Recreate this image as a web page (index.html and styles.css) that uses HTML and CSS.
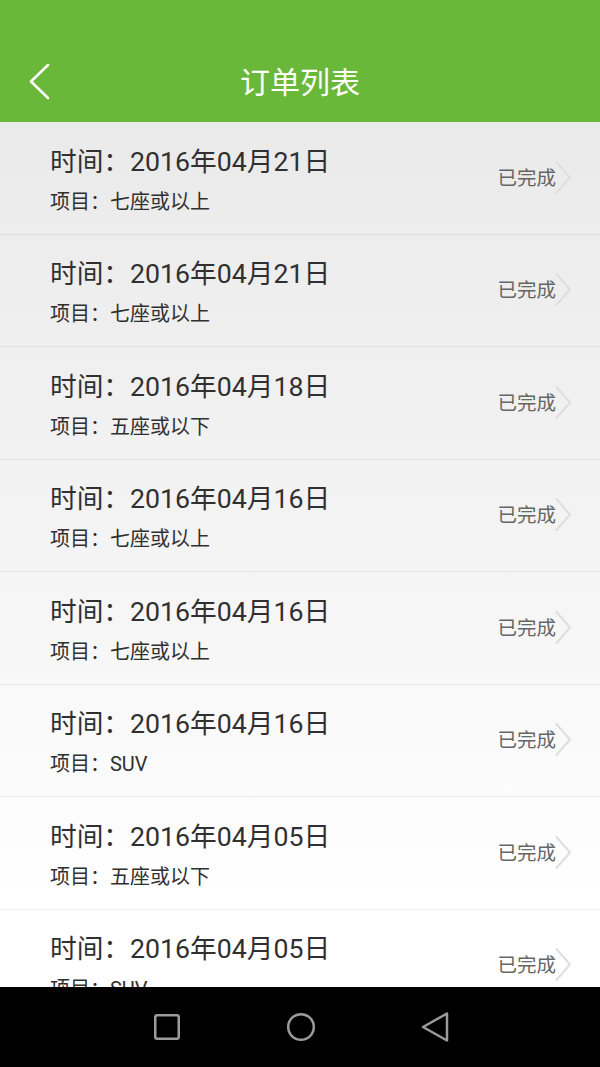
FILE: index.html
```html
<!DOCTYPE html>
<html lang="zh-CN">
<head>
<meta charset="utf-8">
<title>订单列表</title>
<link rel="stylesheet" href="styles.css">
</head>
<body>
<div class="screen">
  <header class="appbar">
    <div class="statusbar"></div>
    <div class="toolbar">
      <svg class="back" width="24" height="40" viewBox="0 0 24 40"><polyline points="19,1 2,17.5 19,34" fill="none" stroke="#fff" stroke-width="2.6" stroke-linecap="round" stroke-linejoin="round"/></svg>
      <h1 class="title">订单列表</h1>
    </div>
  </header>
  <main class="list">
    <div class="row">
      <div class="info"><div class="time">时间：2016年04月21日</div><div class="item">项目：七座或以上</div></div>
      <div class="status">已完成</div>
      <svg class="chev" width="18" height="36" viewBox="0 0 18 36"><polyline points="2,1.5 16,17.5 2,33.5" fill="none" stroke="#dedede" stroke-width="2"/></svg>
    </div>
    <div class="row">
      <div class="info"><div class="time">时间：2016年04月21日</div><div class="item">项目：七座或以上</div></div>
      <div class="status">已完成</div>
      <svg class="chev" width="18" height="36" viewBox="0 0 18 36"><polyline points="2,1.5 16,17.5 2,33.5" fill="none" stroke="#dedede" stroke-width="2"/></svg>
    </div>
    <div class="row">
      <div class="info"><div class="time">时间：2016年04月18日</div><div class="item">项目：五座或以下</div></div>
      <div class="status">已完成</div>
      <svg class="chev" width="18" height="36" viewBox="0 0 18 36"><polyline points="2,1.5 16,17.5 2,33.5" fill="none" stroke="#dedede" stroke-width="2"/></svg>
    </div>
    <div class="row">
      <div class="info"><div class="time">时间：2016年04月16日</div><div class="item">项目：七座或以上</div></div>
      <div class="status">已完成</div>
      <svg class="chev" width="18" height="36" viewBox="0 0 18 36"><polyline points="2,1.5 16,17.5 2,33.5" fill="none" stroke="#dedede" stroke-width="2"/></svg>
    </div>
    <div class="row">
      <div class="info"><div class="time">时间：2016年04月16日</div><div class="item">项目：七座或以上</div></div>
      <div class="status">已完成</div>
      <svg class="chev" width="18" height="36" viewBox="0 0 18 36"><polyline points="2,1.5 16,17.5 2,33.5" fill="none" stroke="#dedede" stroke-width="2"/></svg>
    </div>
    <div class="row">
      <div class="info"><div class="time">时间：2016年04月16日</div><div class="item">项目：SUV</div></div>
      <div class="status">已完成</div>
      <svg class="chev" width="18" height="36" viewBox="0 0 18 36"><polyline points="2,1.5 16,17.5 2,33.5" fill="none" stroke="#dedede" stroke-width="2"/></svg>
    </div>
    <div class="row">
      <div class="info"><div class="time">时间：2016年04月05日</div><div class="item">项目：五座或以下</div></div>
      <div class="status">已完成</div>
      <svg class="chev" width="18" height="36" viewBox="0 0 18 36"><polyline points="2,1.5 16,17.5 2,33.5" fill="none" stroke="#dedede" stroke-width="2"/></svg>
    </div>
    <div class="row">
      <div class="info"><div class="time">时间：2016年04月05日</div><div class="item">项目：SUV</div></div>
      <div class="status">已完成</div>
      <svg class="chev" width="18" height="36" viewBox="0 0 18 36"><polyline points="2,1.5 16,17.5 2,33.5" fill="none" stroke="#dedede" stroke-width="2"/></svg>
    </div>
  </main>
  <nav class="navbar">
    <svg width="30" height="30" viewBox="0 0 30 30"><rect x="3.25" y="3.25" width="23.5" height="23.5" rx="2" fill="none" stroke="#9b9b9b" stroke-width="2.5"/></svg>
    <svg width="30" height="30" viewBox="0 0 30 30"><circle cx="15" cy="15" r="12.8" fill="none" stroke="#9b9b9b" stroke-width="2.5"/></svg>
    <svg width="30" height="32" viewBox="0 0 30 32"><path d="M27,2.5 L3,16 L27,29.5 Z" fill="none" stroke="#9b9b9b" stroke-width="2.5" stroke-linejoin="round"/></svg>
  </nav>
</div>
</body>
</html>
```

FILE: styles.css
```css
* { box-sizing: border-box; }
html, body { margin: 0; padding: 0; }
body {
  font-family: Roboto, "Noto Sans CJK SC", sans-serif;
  background: #fff;
}
.screen {
  width: 600px;
  height: 1067px;
  display: flex;
  flex-direction: column;
  overflow: hidden;
}
.appbar {
  background: #6ab83a;
  flex: 0 0 122px;
  display: flex;
  flex-direction: column;
}
.statusbar { flex: 0 0 40px; }
.toolbar {
  flex: 1;
  display: flex;
  align-items: center;
  justify-content: center;
  position: relative;
}
.back {
  position: absolute;
  left: 29px;
  top: 24px;
}
.title {
  margin: 0;
  color: #fff;
  font-size: 30px;
  font-weight: 400;
  line-height: 40px;
  padding-top: 3px;
}
.list {
  flex: 1;
  overflow: hidden;
  background: linear-gradient(to bottom, #eaeaea 0%, #f4f4f4 50%, #ffffff 90%);
}
.row {
  height: 112.5px;
  display: flex;
  align-items: center;
  padding: 0 28px 0 50px;
  border-bottom: 1px solid rgba(0, 0, 0, 0.06);
}
.info {
  flex: 1;
  display: flex;
  flex-direction: column;
  gap: 13px;
  color: #303030;
  padding-top: 5px;
}
.time {
  font-size: 26.7px;
  line-height: 30px;
}
.item {
  font-size: 20px;
  line-height: 24px;
}
.status {
  font-size: 19.5px;
  color: #666;
  line-height: 24px;
  padding-top: 2px;
}
.chev { margin-left: -2px; }
.navbar {
  flex: 0 0 80px;
  background: #000;
  display: flex;
  align-items: center;
  justify-content: center;
  gap: 104px;
  padding-left: 2px;
}
```
